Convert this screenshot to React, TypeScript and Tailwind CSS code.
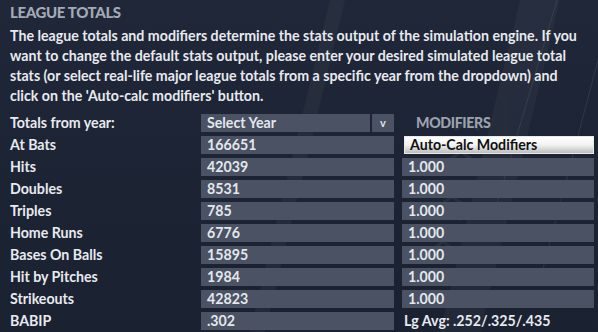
import React from 'react';

const rows = [
  { label: 'Hits', value: '42039' },
  { label: 'Doubles', value: '8531' },
  { label: 'Triples', value: '785' },
  { label: 'Home Runs', value: '6776' },
  { label: 'Bases On Balls', value: '15895' },
  { label: 'Hit by Pitches', value: '1984' },
  { label: 'Strikeouts', value: '42823' },
];

const Backdrop = () => (
  <svg className="absolute inset-0 pointer-events-none" width="598" height="332" viewBox="0 0 598 332">
    <g fill="#ffffff" opacity="0.035">
      <polygon points="440,332 520,0 560,0 480,332" />
      <polygon points="250,332 330,0 345,0 265,332" />
    </g>
    <g stroke="#ffffff" strokeWidth="1" opacity="0.08">
      <line x1="495" y1="210" x2="560" y2="-10" />
      <line x1="540" y1="280" x2="598" y2="60" />
    </g>
    <g fill="none" stroke="#ffffff" strokeWidth="3" opacity="0.05">
      <path d="M455 130 l12 -8 l12 8" />
      <path d="M452 145 l12 -8 l12 8" />
      <path d="M449 160 l12 -8 l12 8" />
      <path d="M446 175 l12 -8 l12 8" />
      <path d="M443 190 l12 -8 l12 8" />
      <path d="M440 205 l12 -8 l12 8" />
      <path d="M437 220 l12 -8 l12 8" />
      <path d="M434 235 l12 -8 l12 8" />
      <path d="M431 250 l12 -8 l12 8" />
    </g>
  </svg>
);

const Field: React.FC<{ children?: React.ReactNode; className?: string }> = ({ children, className = '' }) => (
  <div className={`h-[18px] bg-[#4a5263] text-[#e4e7ec] px-[6px] flex items-center leading-none ${className}`}>
    {children}
  </div>
);

const App: React.FC = () => {
  return (
    <div
      className="relative w-[598px] h-[332px] overflow-hidden bg-gradient-to-b from-[#1f2738] to-[#1a2131] text-[#e8eaef] font-bold text-[14.2px]"
      style={{ fontFamily: 'Lato, "Open Sans", sans-serif' }}
    >
      <Backdrop />
      <div className="relative px-[10px] pt-[2px]">
        <div className="text-[15px] text-[#a3aab6] leading-[20px] tracking-tight font-black">LEAGUE TOTALS</div>
        <p className="mt-[4px] leading-[20px] whitespace-nowrap">
          The league totals and modifiers determine the stats output of the simulation engine. If you
          <br />
          want to change the default stats output, please enter your desired simulated league total
          <br />
          stats (or select real-life major league totals from a specific year from the dropdown) and
          <br />
          click on the 'Auto-calc modifiers' button.
        </p>

        <div className="mt-[8px] grid grid-cols-[183px_193px_192px] gap-x-[8px] gap-y-[4px]">
          <div className="h-[18px] flex items-center">Totals from year:</div>
          <div className="flex gap-[2px]">
            <Field className="flex-1">Select Year</Field>
            <div className="w-[22px] h-[18px] bg-[#4a5263] flex items-center justify-center text-[#dfe2e8] text-[11px]">v</div>
          </div>
          <div className="h-[18px] flex items-center pl-[14px] text-[#9ba2ae] tracking-tight font-black">MODIFIERS</div>

          <div className="h-[18px] flex items-center">At Bats</div>
          <Field>166651</Field>
          <div className="h-[18px] ml-[2px] bg-gradient-to-b from-[#ffffff] via-[#f2f2f2] to-[#bcbcbc] border border-[#e9e9e9] text-[#111111] flex items-center px-[5px] leading-none">
            Auto-Calc Modifiers
          </div>

          {rows.map((row) => (
            <React.Fragment key={row.label}>
              <div className="h-[18px] flex items-center">{row.label}</div>
              <Field>{row.value}</Field>
              <Field>1.000</Field>
            </React.Fragment>
          ))}

          <div className="h-[18px] flex items-center">BABIP</div>
          <Field>.302</Field>
          <div className="h-[18px] flex items-center px-[2px]">Lg Avg: .252/.325/.435</div>
        </div>
      </div>
    </div>
  );
};

export default App;
